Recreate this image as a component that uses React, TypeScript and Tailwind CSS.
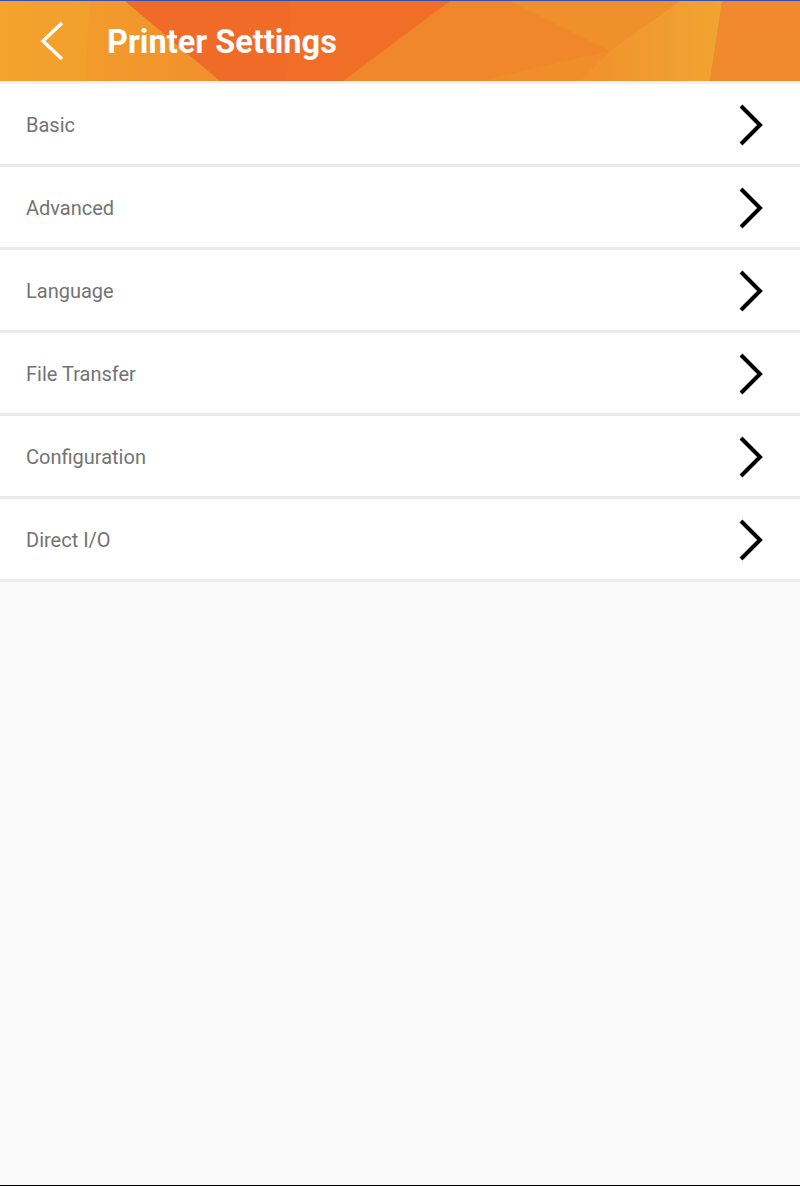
import React from "react";

const items = ["Basic", "Advanced", "Language", "File Transfer", "Configuration", "Direct I/O"];

function HeaderBg() {
  return (
    <svg className="absolute inset-0 h-full w-full" viewBox="0 0 800 80" preserveAspectRatio="none">
      <defs>
        <linearGradient id="lg1" x1="0" y1="0" x2="1" y2="0">
          <stop offset="0" stopColor="#f4a22c" />
          <stop offset="1" stopColor="#f0902c" />
        </linearGradient>
        <linearGradient id="lg2" x1="0" y1="0" x2="1" y2="0">
          <stop offset="0" stopColor="#f0922d" />
          <stop offset="1" stopColor="#f0a431" />
        </linearGradient>
      </defs>
      <rect x="0" y="0" width="800" height="80" fill="#f0882b" />
      <polygon points="0,0 125,0 220,80 0,80" fill="url(#lg1)" />
      <polygon points="0,0 90,0 85,80 0,80" fill="#f4a42c" opacity="0.5" />
      <polygon points="125,0 450,0 343,80 220,80" fill="#ef6b27" />
      <polygon points="290,0 450,0 343,80 285,80" fill="#f07029" opacity="0.6" />
      <polygon points="510,0 680,0 610,50" fill="#f0902d" />
      <polygon points="610,50 580,80 480,80" fill="#f08e2c" />
      <polygon points="680,0 722,0 710,80 580,80 610,50" fill="url(#lg2)" />
      <polygon points="722,0 800,0 800,80 710,80" fill="#f08a2c" />
    </svg>
  );
}

export default function App() {
  return (
    <div className="flex h-[1186px] w-[800px] flex-col bg-[#f9f9f9]" style={{ fontFamily: "Roboto, 'Liberation Sans', sans-serif" }}>
      <div className="h-px bg-[#3a4db0]" />
      <div className="relative h-[80px] overflow-hidden">
        <HeaderBg />
        <div className="relative flex h-full items-center pt-[2px]">
          <svg className="ml-[40px]" width="26" height="42" viewBox="0 0 26 42">
            <polyline points="22,2 3,20 22,38" fill="none" stroke="#ffffff" strokeWidth="3.5" />
          </svg>
          <span className="ml-[41px] text-[32.5px] font-bold leading-none text-white">Printer Settings</span>
        </div>
      </div>
      <div className="h-[3px] bg-[#f2f2f2]" />
      <div className="flex flex-col">
        {items.map((label) => (
          <div key={label} className="flex h-[83px] items-center justify-between border-b-[3px] border-[#ebebeb] bg-white pt-[2px]">
            <span className="ml-[26px] text-[20px] text-[#737373]">{label}</span>
            <svg className="mr-[36px]" width="28" height="42" viewBox="0 0 28 42">
              <polyline points="5,2 24,21 5,40" fill="none" stroke="#000000" strokeWidth="4" />
            </svg>
          </div>
        ))}
      </div>
      <div className="flex-1" />
      <div className="h-px bg-black" />
    </div>
  );
}
